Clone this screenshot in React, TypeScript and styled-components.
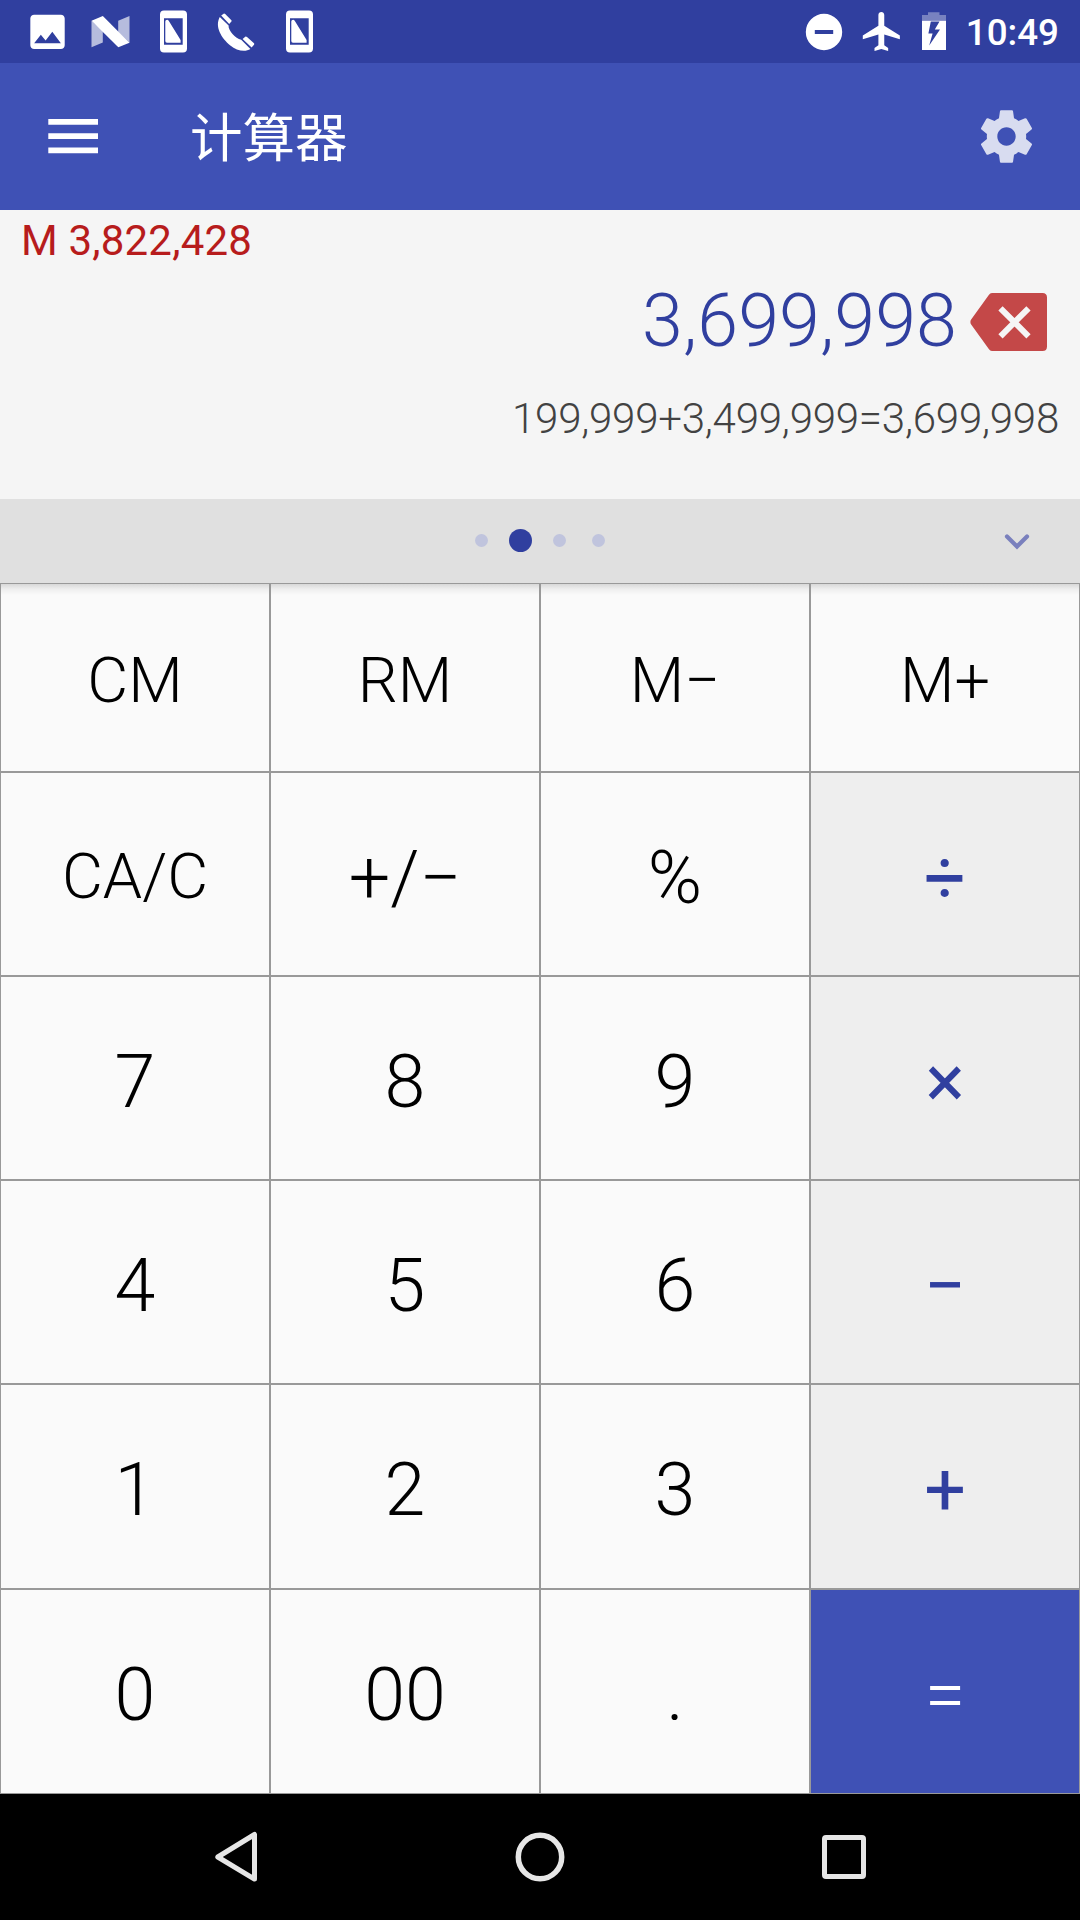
import React from 'react';
import styled, { createGlobalStyle } from 'styled-components';

const GlobalStyle = createGlobalStyle`
  * { box-sizing: border-box; }
  body {
    margin: 0;
    background: #000;
    font-family: Roboto, "Noto Sans CJK SC", sans-serif;
  }
`;

const Screen = styled.div`
  display: flex;
  flex-direction: column;
  width: 1080px;
  height: 1920px;
  overflow: hidden;
`;

const StatusBar = styled.header`
  display: flex;
  justify-content: space-between;
  height: 63px;
  padding: 0 21px 0 16px;
  background: #303f9f;
`;

const StatusGroup = styled.div`
  display: flex;
  align-items: center;
`;

const StatusIcon = styled.svg<{ $w: number }>`
  display: block;
  width: ${(p) => p.$w}px;
  height: 63px;
  fill: #fff;
`;

const Clock = styled.span`
  margin-left: 7px;
  padding-top: 3px;
  color: #fff;
  font-size: 36.75px;
  font-weight: 500;
  line-height: 60px;
`;

const AppBar = styled.div`
  display: flex;
  align-items: center;
  height: 147px;
  padding: 0 42.5px 0 42px;
  background: #3f51b5;
`;

const BarIcon = styled.svg`
  display: block;
  width: 63px;
  height: 63px;
`;

const Title = styled.h1`
  flex: 1;
  margin: 0 0 0 85px;
  padding-top: 4px;
  color: #fff;
  font-size: 52.5px;
  font-weight: 400;
  line-height: 80px;
`;

const Display = styled.section`
  display: flex;
  flex-direction: column;
  height: 289px;
  padding: 6px 21px 0;
  background: #f5f5f5;
`;

const Memory = styled.div`
  color: #b71c1c;
  font-size: 42px;
  letter-spacing: 0.2px;
  line-height: 49px;
`;

const ResultRow = styled.div`
  display: flex;
  justify-content: flex-end;
  align-items: center;
  height: 94px;
  margin-top: 9px;
  padding-right: 12px;
`;

const Result = styled.output`
  color: #303f9f;
  font-size: 73.5px;
  font-weight: 300;
  letter-spacing: 0.15px;
  line-height: 86px;
`;

const DeleteIcon = styled.svg`
  display: block;
  width: 77px;
  height: 58px;
  margin: 2px 0 0 13px;
`;

const Expression = styled.div`
  margin-top: 26px;
  color: #424242;
  font-size: 42px;
  font-weight: 300;
  letter-spacing: -0.23px;
  line-height: 50px;
  text-align: right;
`;

const Pager = styled.nav`
  display: grid;
  grid-template-columns: 1fr auto 1fr;
  align-items: center;
  height: 84px;
  background: #e0e0e0;
`;

const Dots = styled.div`
  display: flex;
  grid-column: 2;
  margin-bottom: 2px;
`;

const DotSlot = styled.span`
  display: flex;
  align-items: center;
  justify-content: center;
  width: 39px;
  height: 24px;
`;

const Dot = styled.i<{ $active: boolean }>`
  width: ${(p) => (p.$active ? 23 : 13)}px;
  height: ${(p) => (p.$active ? 23 : 13)}px;
  border-radius: 50%;
  background: ${(p) => (p.$active ? '#303f9f' : '#c0c4dd')};
`;

const Chevron = styled.svg`
  display: block;
  justify-self: end;
  width: 26px;
  height: 18px;
  margin: 1px 50px 0 0;
`;

const Keypad = styled.main`
  display: grid;
  grid-template-columns: repeat(4, 270px);
  grid-template-rows: 189px repeat(3, 204px) repeat(2, 205px);
`;

type Tone = 'plain' | 'operator' | 'equals';

const tones: Record<Tone, { bg: string; fg: string; weight: number }> = {
  plain: { bg: '#fafafa', fg: '#000', weight: 300 },
  operator: { bg: '#eeeeee', fg: '#303f9f', weight: 450 },
  equals: { bg: '#3f51b5', fg: '#fff', weight: 300 },
};

const Key = styled.button<{ $tone: Tone; $size: number; $shaded: boolean }>`
  display: flex;
  align-items: center;
  justify-content: center;
  margin: 0;
  padding: 0.1em 0 0;
  border: 1px solid #999;
  border-radius: 0;
  background: ${(p) =>
    p.$shaded
      ? `linear-gradient(#d8d8d8, #eeeeee 5px, ${tones[p.$tone].bg} 11px)`
      : tones[p.$tone].bg};
  color: ${(p) => tones[p.$tone].fg};
  font-family: inherit;
  font-size: ${(p) => p.$size}px;
  font-weight: ${(p) => tones[p.$tone].weight};
  line-height: 1.172;
`;

const NavBar = styled.footer`
  display: flex;
  align-items: center;
  justify-content: center;
  gap: 240px;
  height: 126px;
  background: #000;
`;

const NavIcon = styled.svg`
  display: block;
  width: 64px;
  height: 64px;
  fill: none;
  stroke: #e6e6e6;
  stroke-linejoin: round;
`;

const RotatePhone = () => (
  <StatusIcon $w={63} viewBox="0 0 63 63">
    <path
      fillRule="evenodd"
      d="M22 10.5h19a4 4 0 0 1 4 4v34a4 4 0 0 1-4 4H22a4 4 0 0 1-4-4v-34a4 4 0 0 1 4-4zM22 18.3v26.4h18.7V18.3z"
    />
    <path d="M23.3 21.5q0-1.8 1.8-1.8 1 0 1.6 1L38.6 40v2.8H25q-1.7 0-1.7-1.7z" />
  </StatusIcon>
);

const rows: string[][] = [
  ['CM', 'RM', 'M−', 'M+'],
  ['CA/C', '+/−', '%', '÷'],
  ['7', '8', '9', '×'],
  ['4', '5', '6', '−'],
  ['1', '2', '3', '+'],
  ['0', '00', '.', '='],
];

const toneOf = (row: number, col: number): Tone => {
  if (col < 3 || row === 0) return 'plain';
  return row === 5 ? 'equals' : 'operator';
};

export default function App() {
  return (
    <>
      <GlobalStyle />
      <Screen>
        <StatusBar>
          <StatusGroup>
            <StatusIcon $w={63} viewBox="0 0 63 63">
              <path
                transform="translate(8.6 8.9) scale(1.91)"
                d="M21 19V5c0-1.1-.9-2-2-2H5c-1.1 0-2 .9-2 2v14c0 1.1.9 2 2 2h14c1.1 0 2-.9 2-2zM8.5 13.5l2.5 3.01L14.5 12l4.5 6H5l3.5-4.5z"
              />
            </StatusIcon>
            <StatusIcon $w={63} viewBox="0 0 63 63">
              <path fillOpacity=".65" d="M12.5 20.7L23.8 31v11.6l-11.3 4.7zM39.2 20.7L50.5 16v26.7L39.2 32z" />
              <path d="M12.5 20.7L23.8 16l26.7 26.7-11.2 4.6z" />
            </StatusIcon>
            <RotatePhone />
            <StatusIcon $w={63} viewBox="0 0 63 63">
              <path d="M14.8 17L23.6 25.4C23 30 30.4 38.6 36.2 39.8L45.4 49C40 52.4 31.5 50.6 25.3 45.4C16.2 38 9.5 26.5 14.8 17z" />
              <path d="M16.2 15.6L19 13.5Q19.6 13.4 20.2 14L26.4 20.2Q27 21 26.4 21.6L24.2 24zM37.6 39L40.6 36.6Q41.3 36.4 42 37L49 43.2Q49.6 43.9 49 44.7L46.6 47.5z" />
            </StatusIcon>
            <RotatePhone />
          </StatusGroup>
          <StatusGroup>
            <StatusIcon $w={38} viewBox="0 0 38 63">
              <path fillRule="evenodd" d="M19 13.8a18.2 18.2 0 1 1 0 36.4a18.2 18.2 0 0 1 0-36.4zM9.8 30v4h18.4v-4z" />
            </StatusIcon>
            <StatusIcon $w={78} viewBox="0 0 78 63">
              <path
                transform="translate(15.9 8.1) scale(1.95)"
                d="M21 16v-2l-8-5V3.5c0-.83-.67-1.5-1.5-1.5S10 2.67 10 3.5V9l-8 5v2l8-2.5V19l-2 1.5V22l3.5-1 3.5 1v-1.5L13 19v-5.5l8 2.5z"
              />
            </StatusIcon>
            <StatusIcon $w={38} viewBox="0 0 38 63">
              <path fillOpacity=".35" d="M1 20.7v-5.7h6v-2.7h11.5V15H25v5.7z" />
              <path fillRule="evenodd" d="M1 20.7h24V50H1zM9.8 21.5L7.4 33.5h4.2L8.2 45.5 19 29.5H13.8L18.5 21.5z" />
            </StatusIcon>
            <Clock>10:49</Clock>
          </StatusGroup>
        </StatusBar>

        <AppBar>
          <BarIcon viewBox="0 0 63 63" fill="#fff">
            <path d="M6.3 14h49.7v5.7H6.3zM6.3 28.3h49.7V34H6.3zM6.3 42.6h49.7v5.7H6.3z" />
          </BarIcon>
          <Title>计算器</Title>
          <BarIcon viewBox="0 0 24 24" fill="#fff" fillOpacity=".8">
            <path d="M19.43 12.98c.04-.32.07-.64.07-.98s-.03-.66-.07-.98l2.11-1.65c.19-.15.24-.42.12-.64l-2-3.46c-.12-.22-.39-.3-.61-.22l-2.49 1c-.52-.4-1.08-.73-1.69-.98l-.38-2.65C14.46 2.18 14.25 2 14 2h-4c-.25 0-.46.18-.49.42l-.38 2.65c-.61.25-1.17.59-1.69.98l-2.49-1c-.23-.09-.49 0-.61.22l-2 3.46c-.13.22-.07.49.12.64l2.11 1.65c-.04.32-.07.65-.07.98s.03.66.07.98l-2.11 1.65c-.19.15-.24.42-.12.64l2 3.46c.12.22.39.3.61.22l2.49-1c.52.4 1.08.73 1.69.98l.38 2.65c.03.24.24.42.49.42h4c.25 0 .46-.18.49-.42l.38-2.65c.61-.25 1.17-.59 1.69-.98l2.49 1c.23.09.49 0 .61-.22l2-3.46c.12-.22.07-.49-.12-.64l-2.11-1.65zM12 15.5c-1.93 0-3.5-1.57-3.5-3.5s1.57-3.5 3.5-3.5 3.5 1.57 3.5 3.5-1.57 3.5-3.5 3.5z" />
          </BarIcon>
        </AppBar>

        <Display>
          <Memory>M 3,822,428</Memory>
          <ResultRow>
            <Result>3,699,998</Result>
            <DeleteIcon viewBox="0 0 77 58">
              <path fill="#c44848" d="M22 0h50.5q4.5 0 4.5 4.5v49q0 4.5-4.5 4.5H22q-2 0-3.2-2L.8 31Q0 29 .8 27L18.8 2Q20 0 22 0z" />
              <path stroke="#f5f5f5" strokeWidth="6" d="M30.5 15.3l28 28M58.5 15.3l-28 28" />
            </DeleteIcon>
          </ResultRow>
          <Expression>199,999+3,499,999=3,699,998</Expression>
        </Display>

        <Pager>
          <Dots>
            {[0, 1, 2, 3].map((page) => (
              <DotSlot key={page}>
                <Dot $active={page === 1} />
              </DotSlot>
            ))}
          </Dots>
          <Chevron viewBox="0 0 26 18">
            <path d="M3 3.5l10 10 10-10" fill="none" stroke="#7a80bd" strokeWidth="4.2" strokeLinecap="round" />
          </Chevron>
        </Pager>

        <Keypad>
          {rows.map((row, r) =>
            row.map((label, c) => (
              <Key
                key={label}
                $tone={toneOf(r, c)}
                $size={r === 0 || label === 'CA/C' ? 63 : 73.5}
                $shaded={r === 0}
              >
                {label}
              </Key>
            )),
          )}
        </Keypad>

        <NavBar>
          <NavIcon viewBox="0 0 64 64" strokeWidth="5">
            <path d="M50.5 9.5v44.6L13.8 32z" />
          </NavIcon>
          <NavIcon viewBox="0 0 64 64" strokeWidth="5.5">
            <circle cx="32" cy="32" r="21.7" />
          </NavIcon>
          <NavIcon viewBox="0 0 64 64" strokeWidth="5">
            <rect x="12.5" y="12.5" width="39" height="39" rx="1.5" />
          </NavIcon>
        </NavBar>
      </Screen>
    </>
  );
}
